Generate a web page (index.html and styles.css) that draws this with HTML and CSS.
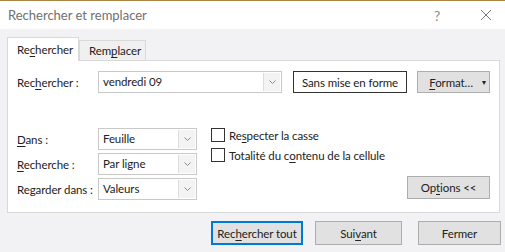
FILE: index.html
```html
<!DOCTYPE html>
<html lang="fr">
<head>
    <link rel="stylesheet" href="styles.css">
    <title>Rechercher et remplacer</title>
</head>
<body>
    <div class="dialog">
        <!--TITLE BAR-->
        <div class="titlebar">
            <span class="title">Rechercher et remplacer</span>
            <span class="help">?</span>
            <span class="close">
                <svg width="12" height="12" viewBox="0 0 12 12"><path d="M1 1 L11 11 M11 1 L1 11" stroke="#7a7a7a" stroke-width="1" fill="none"/></svg>
            </span>
        </div>

        <!--TABS-->
        <div class="tabs">
            <div class="tab active">Re<u>c</u>hercher</div>
            <div class="tab">Rem<u>p</u>lacer</div>
        </div>

        <!--PANEL-->
        <div class="panel">
            <div class="row-find">
                <label class="label">Rec<u>h</u>ercher :</label>
                <div class="combo combo-find">
                    <span class="combo-text">vendredi 09</span>
                    <span class="combo-arrow"><svg width="7" height="4" viewBox="0 0 7 4"><path d="M0.5 0.5 L3.5 3.5 L6.5 0.5" stroke="#8a8a8a" fill="none"/></svg></span>
                </div>
                <div class="button button-plain">Sans mise en forme</div>
                <div class="button button-format"><span><u>F</u>ormat…</span><span class="caret">&#9662;</span></div>
            </div>

            <div class="options">
                <div class="fields">
                    <div class="field">
                        <label class="label"><u>D</u>ans :</label>
                        <div class="combo combo-small">
                            <span class="combo-text">Feuille</span>
                            <span class="combo-arrow"><svg width="7" height="4" viewBox="0 0 7 4"><path d="M0.5 0.5 L3.5 3.5 L6.5 0.5" stroke="#8a8a8a" fill="none"/></svg></span>
                        </div>
                    </div>
                    <div class="field">
                        <label class="label"><u>R</u>echerche :</label>
                        <div class="combo combo-small">
                            <span class="combo-text">Par ligne</span>
                            <span class="combo-arrow"><svg width="7" height="4" viewBox="0 0 7 4"><path d="M0.5 0.5 L3.5 3.5 L6.5 0.5" stroke="#8a8a8a" fill="none"/></svg></span>
                        </div>
                    </div>
                    <div class="field">
                        <label class="label">Regarder dans :</label>
                        <div class="combo combo-small">
                            <span class="combo-text">Valeurs</span>
                            <span class="combo-arrow"><svg width="7" height="4" viewBox="0 0 7 4"><path d="M0.5 0.5 L3.5 3.5 L6.5 0.5" stroke="#8a8a8a" fill="none"/></svg></span>
                        </div>
                    </div>
                </div>

                <div class="checks">
                    <div class="check"><span class="box"></span>Re<u>s</u>pecter la casse</div>
                    <div class="check"><span class="box"></span>Totalité du c<u>o</u>ntenu de la cellule</div>
                    <div class="button button-options">Op<u>t</u>ions &lt;&lt;</div>
                </div>
            </div>
        </div>

        <!--BOTTOM BUTTONS-->
        <div class="actions">
            <div class="button button-default">Rec<u>h</u>ercher tout</div>
            <div class="button button-next">Sui<u>v</u>ant</div>
            <div class="button button-close">Fermer</div>
        </div>
    </div>
</body>
</html>
```
FILE: styles.css
```css
body{
    margin: 0;
    font-family: "Lato", "Open Sans", sans-serif;
    font-size: 11.5px;
    letter-spacing: -0.1px;
    color: #222222;
    background-color: #f2f1f3;
}
u{
    text-decoration: underline;
    text-underline-offset: 2px;
}
.dialog{
    width: 505px;
    height: 252px;
    border-top: 1px solid #a98645;
    box-sizing: border-box;
}
.titlebar{
    height: 28px;
    background-color: #ffffff;
    display: flex;
    align-items: center;
    padding-left: 8px;
}
.title{
    flex: 1;
    font-size: 13px;
    letter-spacing: 0;
    color: #707070;
}
.help{
    width: 46px;
    font-size: 14px;
    color: #8a8a8a;
}
.close{
    width: 25px;
    display: flex;
    align-items: center;
}
.tabs{
    display: flex;
    align-items: flex-end;
    margin: 8px 0 0 7px;
    height: 23px;
}
.tab{
    height: 20px;
    line-height: 19px;
    padding: 0 9px;
    border: 1px solid #d9d9d9;
    border-bottom: none;
    box-sizing: border-box;
    background-color: #f0f0f0;
    width: 67px;
    white-space: nowrap;
}
.tab.active{
    height: 24px;
    width: 72px;
    line-height: 24px;
    background-color: #ffffff;
    margin-bottom: -1px;
    position: relative;
    z-index: 1;
}
.panel{
    margin-left: 7px;
    width: 493px;
    height: 153px;
    box-sizing: border-box;
    background-color: #ffffff;
    border: 1px solid #d9d9d9;
    padding: 10px 0 0 9px;
}
.row-find{
    display: flex;
    align-items: center;
}
.label{
    width: 81px;
    flex-shrink: 0;
    white-space: nowrap;
}
.combo{
    height: 22px;
    box-sizing: border-box;
    border: 1px solid #c9c9c9;
    display: flex;
    align-items: stretch;
    background-color: #ffffff;
}
.combo-find{
    width: 184px;
}
.combo-small{
    width: 99px;
}
.combo-text{
    flex: 1;
    padding-left: 4px;
    line-height: 20px;
}
.combo-arrow{
    width: 16px;
    margin: 1px;
    border-left: 1px solid #dcdcdc;
    background-color: #f3f3f3;
    display: flex;
    align-items: center;
    justify-content: center;
}
.button{
    height: 22px;
    box-sizing: border-box;
    border: 1px solid #adadad;
    background-color: #e1e1e1;
    display: flex;
    align-items: center;
    justify-content: center;
    white-space: nowrap;
}
.button-plain{
    width: 114px;
    margin-left: 11px;
    background-color: #ffffff;
    border-color: #333333;
}
.button-format{
    width: 73px;
    margin-left: 10px;
    justify-content: flex-end;
    padding-right: 3px;
}
.caret{
    font-size: 8px;
    margin-left: 9px;
}
.options{
    display: flex;
    margin-top: 35px;
}
.fields{
    display: flex;
    flex-direction: column;
    gap: 3px;
}
.field{
    display: flex;
    align-items: center;
}
.checks{
    margin: -3px 0 0 14px;
    width: 279px;
    display: flex;
    flex-direction: column;
}
.check{
    display: flex;
    align-items: center;
    height: 20px;
}
.box{
    width: 14px;
    height: 14px;
    border: 1px solid #333333;
    box-sizing: border-box;
    margin-right: 4px;
}
.button-options{
    width: 83px;
    height: 23px;
    align-self: flex-end;
    margin-top: 11px;
}
.actions{
    display: flex;
    margin: 8px 0 0 211px;
}
.button-default{
    width: 92px;
    height: 24px;
    border: 2px solid #0078d7;
    background-color: #e1e1e1;
}
.button-next{
    width: 87px;
    height: 24px;
    margin-left: 12px;
}
.button-close{
    width: 83px;
    height: 24px;
    margin-left: 16px;
}
```
